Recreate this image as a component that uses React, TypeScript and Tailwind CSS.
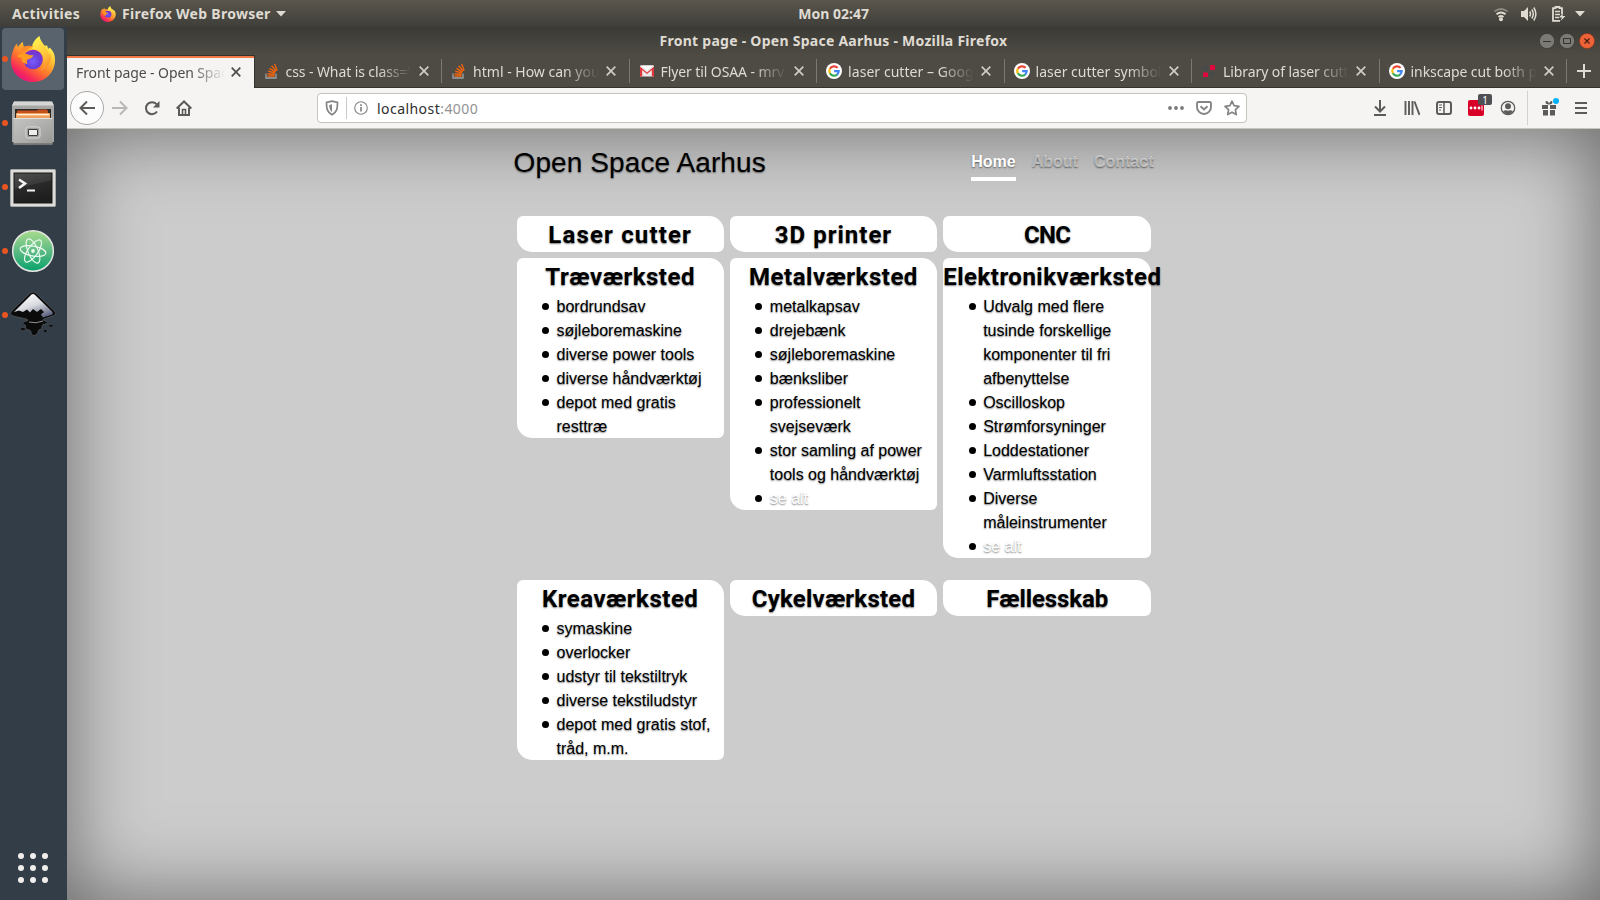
import React from "react";

const UI = "font-['Noto_Sans',sans-serif]";

function FirefoxLogo({ id, size }: { id: string; size: number }) {
  return (
    <svg width={size} height={size} viewBox="0 0 46 46" className="shrink-0">
      <defs>
        <linearGradient id={id + "a"} x1="0.85" y1="0.1" x2="0.2" y2="0.95">
          <stop offset="0" stopColor="#fff44f" />
          <stop offset="0.3" stopColor="#ffb52e" />
          <stop offset="0.6" stopColor="#ff6a30" />
          <stop offset="0.85" stopColor="#f5245f" />
          <stop offset="1" stopColor="#e31587" />
        </linearGradient>
        <radialGradient id={id + "b"} cx="0.5" cy="0.6" r="0.6">
          <stop offset="0" stopColor="#7a5cff" />
          <stop offset="0.6" stopColor="#6a3fd8" />
          <stop offset="1" stopColor="#8a2bc8" />
        </radialGradient>
        <linearGradient id={id + "c"} x1="0.3" y1="0" x2="0.7" y2="1">
          <stop offset="0" stopColor="#fff550" />
          <stop offset="0.6" stopColor="#ffc43a" />
          <stop offset="1" stopColor="#ff8a2a" />
        </linearGradient>
      </defs>
      <path
        d="M3 15c.6-3 2.200-5.500 4-7.500.2 1.500.5 2.500 1.200 3.300C9.500 8.500 11 7 13 6c-.1 2 .3 3.600 1.200 5h10L37 9.500c.5 1 .8 2 1.100 3.500l1.600-1.500C43.500 15 45.500 20 45 25.500 44.200 37.500 34.700 46 23 46S1 37 1 25c0-4 .7-7 2-10z"
        fill={"url(#" + id + "a)"}
      />
      <path
        d="M29.500 0c-5 3.500-7.700 8-7.500 13 7 .5 12 5 12.500 12-.2 4-1.800 7-4.500 9.500C38 32 42.500 25.500 40.500 17c-.5 1-.8 1.600-1.500 2.500C38.500 11 30.500 7.500 29.500 0z"
        fill={"url(#" + id + "c)"}
      />
      <circle cx="23" cy="23.500" r="9.800" fill={"url(#" + id + "b)"} />
      <path
        d="M7 20c3-2.500 7-3.500 11-1.500 1.800.9 4 .9 5.500.6-.4 2-2 3-4.500 3.800-2.500.8-2.500 3.100-1.500 5.100-5 0-6.500-4-5.500-6.500-2 0-3.500-.5-5-1.500z"
        fill="#ff9d22"
      />
      <path d="M11 13c3-4 9-4 13-2-4 0-6 1.500-7 3.500l-6 2z" fill="#ff8b28" />
    </svg>
  );
}

function FilesIcon() {
  return (
    <svg width="46" height="46" viewBox="0 0 46 46">
      <defs>
        <linearGradient id="fg" x1="0" y1="0" x2="1" y2="1">
          <stop offset="0" stopColor="#c4c4c2" />
          <stop offset="0.5" stopColor="#b0b0ae" />
          <stop offset="1" stopColor="#979795" />
        </linearGradient>
      </defs>
      <path d="M4 1.500h38l2 4.500v36H2V6z" fill="#a7a7a5" />
      <path d="M4 1.500h38l2 4H2z" fill="#d6d6d4" />
      <rect x="5" y="9" width="36" height="10" fill="#2b2826" />
      <path d="M7 10.500l20 0 1-1h9l1 2v7H7z" fill="#c4501c" />
      <rect x="6" y="13" width="34" height="6" fill="#f0a05a" />
      <rect x="7" y="14" width="32" height="1.300" fill="#fff0dc" />
      <path d="M3.500 18h39v26.500h-39z" fill="url(#fg)" />
      <path d="M3.500 18h39v1h-39z" fill="#dededc" />
      <path d="M3.500 43h39v1.500h-39z" fill="#7d7d7b" />
      <rect x="16" y="27" width="14" height="11" rx="2" fill="#a0a09e" stroke="#dcdcda" />
      <rect x="18.500" y="29.500" width="9" height="6" rx="0.500" fill="#eeeeec" stroke="#3c3c3a" />
    </svg>
  );
}

function TerminalIcon() {
  return (
    <svg width="46" height="46" viewBox="0 0 46 46">
      <defs>
        <linearGradient id="tg" x1="0" y1="0" x2="0.300" y2="1">
          <stop offset="0" stopColor="#4e4e4e" />
          <stop offset="0.480" stopColor="#3a3a3a" />
          <stop offset="0.500" stopColor="#2a2a2a" />
          <stop offset="1" stopColor="#1e1e1e" />
        </linearGradient>
      </defs>
      <rect x="0.500" y="5.500" width="45" height="37" rx="1" fill="#dcdcda" stroke="#a8a8a6" />
      <rect x="4" y="9" width="38" height="30" fill="url(#tg)" stroke="#161616" />
      <path d="M9 15.500l6 4-6 4.500" fill="none" stroke="#f2f2f2" strokeWidth="2.600" />
      <path d="M17 26.500h8" stroke="#f2f2f2" strokeWidth="2" />
    </svg>
  );
}

function AtomIcon() {
  return (
    <svg width="46" height="46" viewBox="0 0 46 46">
      <defs>
        <linearGradient id="ag" x1="0" y1="0" x2="0" y2="1">
          <stop offset="0" stopColor="#a9dc8e" />
          <stop offset="0.500" stopColor="#5dbb83" />
          <stop offset="1" stopColor="#08a26c" />
        </linearGradient>
      </defs>
      <circle cx="23" cy="23" r="20.300" fill="url(#ag)" stroke="#e4e6e2" strokeWidth="1.500" />
      <g fill="none" stroke="#eafaf0" strokeWidth="1.200">
        <ellipse cx="23" cy="23" rx="13" ry="5" transform="rotate(10 23 23)" />
        <ellipse cx="23" cy="23" rx="13" ry="5" transform="rotate(67 23 23)" />
        <ellipse cx="23" cy="23" rx="13" ry="5" transform="rotate(125 23 23)" />
      </g>
      <circle cx="23" cy="23" r="1.900" fill="#eafaf0" />
    </svg>
  );
}

function InkscapeIcon() {
  return (
    <svg width="46" height="46" viewBox="0 0 46 46">
      <defs>
        <linearGradient id="ig" x1="0.300" y1="0" x2="0.900" y2="1">
          <stop offset="0" stopColor="#ffffff" />
          <stop offset="0.450" stopColor="#d8dade" />
          <stop offset="1" stopColor="#4a5070" />
        </linearGradient>
      </defs>
      <path
        d="M20 1.200q3-2.400 6 0l18 17.300q3.500 4-1 5.500l-9 3c-2 1 0 2 3 2.500 2 1-1 3-4 3-2 2 0 4-3 5-2 0-1 3-4 5.500-3 2-5-1-5-3s-3-2-5-3 1-3-1-4-3-1-2-2.500 5-1 5-2.500S4 25 2 23.500q-3-2 0-5z"
        fill="#0b0b0c"
        stroke="#55585c"
        strokeWidth="0.800"
      />
      <path
        d="M21.500 2.500q1.500-1.200 3 0L42 19.500q2 2.500-1 3.500l-8 2.500-2-3 3-2.500-3-3-4 3-4-3-3 3.500-3-3-4 2.500-4-1.500-5 1.500z"
        fill="url(#ig)"
      />
      <path d="M19 30q7 2 14-1" stroke="#8d9095" strokeWidth="1" fill="none" />
      <path d="M10 36q3-1 5 0t-1 2.500-4-2.500zM33 38q3-1 4 0t-1 2.500-3-2.500zM38 33q3-1 5 0t-1 2-4-2z" fill="#0b0b0c" stroke="#4c5055" strokeWidth="0.600" />
    </svg>
  );
}

function StackIcon() {
  return (
    <svg width="16" height="16" viewBox="0 0 16 16" className="shrink-0">
      <path d="M2 10.500V15h10v-4.500" fill="none" stroke="#9ea1a4" strokeWidth="1.300" />
      <g stroke="#f0640c" strokeWidth="1.400">
        <path d="M3.500 13h7M3.600 10.700l7 .8M4.200 8.100l6.800 1.900M5.400 5.300l6 3.600M7.600 2.800l4.600 5.300M10.600 1l2.600 6.500" />
      </g>
    </svg>
  );
}

function GmailIcon() {
  return (
    <svg width="16" height="16" viewBox="0 0 16 16" className="shrink-0">
      <path d="M1 2.500h14v11H1z" fill="#eceae8" />
      <path d="M1 13.500V3.500l7 6 7-6v10h-2.200V7L8 11 3.200 7v6.500z" fill="#e0383e" />
      <path d="M2 2.500h12L8 7.500z" fill="#fff" />
    </svg>
  );
}

function GoogleIcon() {
  return (
    <svg width="16" height="16" viewBox="0 0 16 16" className="shrink-0">
      <circle cx="8" cy="8" r="8" fill="#fff" />
      <g fill="none" strokeWidth="2.200">
        <path d="M11.600 4.900A4.700 4.700 0 0 0 3.900 5.800" stroke="#ea4335" />
        <path d="M3.900 5.700a4.700 4.700 0 0 0 0 4.700" stroke="#fbbc05" />
        <path d="M3.900 10.300a4.700 4.700 0 0 0 7.300 1.200" stroke="#34a853" />
        <path d="M11.100 11.600A4.600 4.600 0 0 0 12.700 8.100H8.100" stroke="#4285f4" />
      </g>
    </svg>
  );
}

function LibraryFavicon() {
  return (
    <svg width="16" height="16" viewBox="0 0 16 16" className="shrink-0">
      <path d="M9 2h5v5H9zM2 9.500h5v4.500H2z" fill="#e0073d" />
      <path d="M2 2h5v5H2zM9 9.500h5v4.500H9z" fill="#474a49" />
    </svg>
  );
}

function CloseX({ color }: { color: string }) {
  return (
    <svg width="10" height="10" viewBox="0 0 10 10" className="shrink-0">
      <path d="M.7.700l8.600 8.600M9.300.700L.7 9.300" stroke={color} strokeWidth="1.700" />
    </svg>
  );
}

const tabs: { label: string; icon: React.ReactNode; track: string }[] = [
  { label: "css - What is class='", icon: <StackIcon />, track: "tracking-[-0.1px]" },
  { label: "html - How can you", icon: <StackIcon />, track: "tracking-[0px]" },
  { label: "Flyer til OSAA - mrv", icon: <GmailIcon />, track: "tracking-[-0.1px]" },
  { label: "laser cutter – Goog", icon: <GoogleIcon />, track: "tracking-[0.05px]" },
  { label: "laser cutter symbol", icon: <GoogleIcon />, track: "tracking-[0px]" },
  { label: "Library of laser cutt", icon: <LibraryFavicon />, track: "tracking-[-0.1px]" },
  { label: "inkscape cut both p", icon: <GoogleIcon />, track: "tracking-[-0.1px]" },
];

const fade = "[mask-image:linear-gradient(to_right,#000_calc(100%-34px),transparent)]";

function TopBar() {
  return (
    <header className={"flex h-[27px] shrink-0 items-center bg-linear-to-b from-[#5a564d] to-[#3f3e39] text-[14px] font-bold text-[#dfdbd2] " + UI}>
      <div className="flex flex-1 items-center">
        <span className="ml-3 w-[88px] whitespace-nowrap tracking-[0.3px]">Activities</span>
        <FirefoxLogo id="ft" size={16} />
        <span className="ml-[6px] w-[154px] whitespace-nowrap tracking-[0.28px]">Firefox Web Browser</span>
        <svg width="10" height="6" viewBox="0 0 10 6"><path d="M0 0h10L5 5.500z" fill="#dfdbd2" /></svg>
      </div>
      <span className="whitespace-nowrap">Mon 02:47</span>
      <div className="flex w-[731px] items-center justify-end pr-[15px]">
        <svg width="16" height="16" viewBox="0 0 16 16" fill="none">
          <path d="M1.500 5.500q6.500-5 13 0" stroke="#8c8981" strokeWidth="1.800" />
          <path d="M3.500 8.200q4.500-3.500 9 0M5.500 11q2.500-2 5 0" stroke="#dfdbd2" strokeWidth="1.800" />
          <circle cx="8" cy="13.300" r="2" fill="#dfdbd2" />
        </svg>
        <svg width="16" height="16" viewBox="0 0 16 16" className="ml-[12px]" fill="none">
          <path d="M0 5h3l4-4v14l-4-4H0z" fill="#dfdbd2" />
          <path d="M8.700 5.500q1.600 2.500 0 5M10.800 3.500q3 4.500 0 9M12.800 1.500q4.200 6.500 0 13" stroke="#dfdbd2" strokeWidth="1.500" />
        </svg>
        <svg width="16" height="16" viewBox="0 0 16 16" className="ml-[14px]" fill="none">
          <path d="M9 14.800H2V2.200h2.500V1h4v1.200H11V8" stroke="#dfdbd2" strokeWidth="1.800" />
          <path d="M4 5.500h5M4 8.500h5M4 11.500h4" stroke="#dfdbd2" strokeWidth="1.500" />
          <path d="M12 7l-4 4.500h3L9.500 15l5-5h-3z" fill="#dfdbd2" />
        </svg>
        <svg width="10" height="6" viewBox="0 0 10 6" className="ml-[8px]"><path d="M0 0h10L5 5.500z" fill="#dfdbd2" /></svg>
      </div>
    </header>
  );
}

function Dock() {
  const icons = [<FirefoxLogo id="fd" size={46} />, <FilesIcon />, <TerminalIcon />, <AtomIcon />, <InkscapeIcon />];
  return (
    <aside className="flex w-[67px] shrink-0 flex-col justify-between bg-[#333d47]">
      <div>
        {icons.map((icon, i) => (
          <div key={i} className="flex h-16 py-px pl-[2px]">
            <div className={"flex w-[62px] items-center rounded-[4px] " + (i === 0 ? "bg-[#59636d]" : "")}>
              <span className="size-[6px] shrink-0 rounded-full bg-[#e95420]" />
              <span className="ml-[2px]">{icon}</span>
            </div>
          </div>
        ))}
      </div>
      <div className="mb-[17px] ml-[18px] grid w-[30px] grid-cols-3 gap-[6px]">
        {Array.from({ length: 9 }, (_, i) => (
          <span key={i} className="size-[6px] rounded-full bg-[#f0efed]" />
        ))}
      </div>
    </aside>
  );
}

function TitleBar() {
  return (
    <div className={"flex h-[28px] shrink-0 items-center bg-linear-to-b from-[#3b3a36] to-[#4e4b44] text-[14px] font-bold text-[#dfdbd2] " + UI}>
      <div className="w-[65px]" />
      <span className="flex-1 whitespace-nowrap pb-[2px] text-center tracking-[0.26px]">Front page - Open Space Aarhus - Mozilla Firefox</span>
      <div className="flex w-[65px] justify-end gap-1 pr-[5px]">
        <svg width="16" height="16" viewBox="0 0 16 16"><circle cx="8" cy="8" r="7.600" fill="#7c7a74" stroke="#33322e" strokeWidth=".6" /><path d="M4 8.500h8" stroke="#33322e" /></svg>
        <svg width="16" height="16" viewBox="0 0 16 16"><circle cx="8" cy="8" r="7.600" fill="#7c7a74" stroke="#33322e" strokeWidth=".6" /><path d="M4.500 5.500h7v5h-7z" fill="none" stroke="#33322e" /></svg>
        <svg width="16" height="16" viewBox="0 0 16 16"><circle cx="8" cy="8" r="7.600" fill="#ee6239" stroke="#8a3418" strokeWidth=".6" /><path d="M5.500 5.500l5 5M10.500 5.500l-5 5" stroke="#4a1f10" strokeWidth="1.300" /></svg>
      </div>
    </div>
  );
}

function TabStrip() {
  return (
    <div className={"flex h-[33px] shrink-0 bg-[#4e4b44] text-[14px] text-[#dfdbd2] " + UI}>
      <div className="flex w-[187.600px] shrink-0 items-center border-t border-r border-[#33322e]">
        <div className="flex h-full w-full items-center border-t-2 border-[#f07746] bg-[#f5f4f2] pr-3 pb-[2px] pl-[9px] text-[#4c4c4c]">
          <span className={"w-[149px] overflow-hidden whitespace-nowrap tracking-[-0.1px] " + fade}>Front page - Open Spac</span>
          <span className="ml-[6px] flex"><CloseX color="#4c4c4c" /></span>
        </div>
      </div>
      <div className="flex flex-1 border-b border-[#33322e]">
        {tabs.map((t) => (
          <div key={t.label} className="flex w-[187.500px] shrink-0 items-center pl-[9px]">
            {t.icon}
            <span className={"ml-[6px] w-[126px] overflow-hidden whitespace-nowrap " + t.track + " " + fade}>{t.label}</span>
            <span className="ml-[7px] flex"><CloseX color="#d0ccc3" /></span>
            <span className="ml-auto h-6 w-px bg-[#7b7870]" />
          </div>
        ))}
        <div className="flex flex-1 items-center justify-center">
          <svg width="14" height="14" viewBox="0 0 14 14"><path d="M7 0v14M0 7h14" stroke="#dfdbd2" strokeWidth="2" /></svg>
        </div>
      </div>
    </div>
  );
}

function Toolbar() {
  const s = { fill: "none", stroke: "#5c5b59", strokeWidth: 2 } as const;
  const g = { fill: "none", stroke: "#858483", strokeWidth: 1.7 } as const;
  return (
    <div className={"flex h-[41px] shrink-0 items-center border-b border-[#c8c4be] bg-[#f5f4f2] " + UI}>
      <div className="ml-[3px] flex size-[34px] shrink-0 items-center justify-center rounded-full border border-[#a9a8a6] bg-[#fcfcfc]">
        <svg width="16" height="16" viewBox="0 0 16 16" {...s}><path d="M16 8H1.500M8 1.500L1.500 8 8 14.500" /></svg>
      </div>
      <svg width="16" height="16" viewBox="0 0 16 16" className="ml-[8px]" {...s} stroke="#b9b8b6"><path d="M0 8h14.500M8 1.500L14.500 8 8 14.500" /></svg>
      <svg width="16" height="16" viewBox="0 0 16 16" className="ml-[16px]" {...s}><path d="M13 11.500A6 6 0 1 1 12.500 4.200" /><path d="M15.500 1v6.500H9z" fill="#5c5b59" stroke="none" /></svg>
      <svg width="16" height="16" viewBox="0 0 16 16" className="ml-[16px]" {...s}><path d="M.7 8.500L8 1.500l7.300 7M3 7.500V15h10V7.500" /><path d="M6.500 15V9.500h3V15" strokeWidth="1.600" /></svg>
      <div className="ml-[125px] flex h-[30px] w-[930px] items-center rounded-[4px] border border-[#c6c2bc] bg-white">
        <svg width="14" height="16" viewBox="0 0 14 16" className="ml-[7px]" {...g}><path d="M7 1.200l5.500 1.300c0 6-.5 9.500-5.500 12.300C2 12 1.500 8.500 1.500 2.500z" /><path d="M7 4.200v8C5 10.500 4.300 8.500 4.200 5z" fill="#858483" stroke="none" /></svg>
        <span className="ml-[7px] h-[22px] w-px bg-[#c9c9c9]" />
        <svg width="14" height="14" viewBox="0 0 14 14" className="ml-[7px]" {...g} strokeWidth="1.100"><circle cx="7" cy="7" r="6.300" /><path d="M7 6v4.500M7 3.200v1.700" strokeWidth="1.700" /></svg>
        <span className="ml-[9px] text-[14px] tracking-[0.45px] text-[#2e2e2e]">localhost<span className="text-[#929292]">:4000</span></span>
        <div className="ml-auto flex items-center gap-3 pr-[6px]">
          <svg width="16" height="16" viewBox="0 0 16 16" fill="#7a7a7a"><circle cx="2" cy="8" r="1.900" /><circle cx="8" cy="8" r="1.900" /><circle cx="14" cy="8" r="1.900" /></svg>
          <svg width="16" height="16" viewBox="0 0 16 16" {...g} strokeWidth="1.900"><path d="M2.500 2h11q1.500 0 1.500 1.500V7a7 7 0 0 1-14 0V3.500Q1 2 2.500 2z" /><path d="M4.500 6.200L8 9.500l3.500-3.300" /></svg>
          <svg width="16" height="16" viewBox="0 0 16 16" {...g} strokeLinejoin="round"><path d="M8 1.200l2.100 4.500 4.900.6-3.600 3.400.9 4.900L8 12.200l-4.300 2.400.9-4.900L1 6.300l4.900-.6z" /></svg>
        </div>
      </div>
      <div className="ml-auto flex h-full items-center">
        <svg width="16" height="16" viewBox="0 0 16 16" {...s}><path d="M8 0v11M3 6.500L8 11.500l5-5M2 15h12" /></svg>
        <svg width="16" height="16" viewBox="0 0 16 16" className="ml-4" {...s}><path d="M1.500 1v14M5 1v14M8.500 1v14M10.500 1.500L15.500 15" strokeWidth="1.900" /></svg>
        <svg width="16" height="16" viewBox="0 0 16 16" className="ml-4" {...s}><rect x="1" y="2" width="14" height="12" rx="2" /><path d="M8 2v12" strokeWidth="1.500" /><path d="M3 5h3M3 7.500h3M3 10h2" strokeWidth="1" /></svg>
        <div className="relative ml-4 flex size-4 items-center justify-center rounded-[2px] bg-[#d80027]">
          <svg width="14" height="6" viewBox="0 0 14 6" fill="#fff"><circle cx="2" cy="3" r="1.400" /><circle cx="6" cy="3" r="1.400" /><circle cx="10" cy="3" r="1.400" /><path d="M12.500.500h1v5h-1z" /></svg>
          <span className="absolute -top-[6px] left-[10px] flex h-[11px] w-[14px] items-center justify-center rounded-[2px] bg-[#4e5054] text-[10px] leading-none text-white">1</span>
        </div>
        <svg width="16" height="16" viewBox="0 0 16 16" className="ml-4" fill="none" stroke="#5c5b59"><circle cx="8" cy="8" r="6.700" strokeWidth="1.300" /><circle cx="8" cy="6.300" r="3" fill="#5c5b59" stroke="none" /><path d="M3 11.500q2 -2 5-.8 3-1.200 5 .8-2 2.700-5 2.700t-5-2.700z" fill="#5c5b59" stroke="none" /></svg>
        <span className="ml-[11px] h-[34px] w-px bg-[#d3d1ce]" />
        <div className="relative ml-[13px] size-4">
          <svg width="16" height="16" viewBox="0 0 16 16" fill="#5c5b59"><path d="M1 5h6v4H1zM9 5h6v4H9zM2 10h5v5.500H2zM9 10h5v5.500H9z" /><path d="M7.500 4.500C4 4.500 4 1 5.500 1S7.500 2.500 8 3.500C8.500 2.500 9 1 10.500 1S12 4.500 8.500 4.500z" /></svg>
          <span className="absolute -top-[2px] left-[12px] size-[6px] rounded-full bg-[#00b3f4]" />
        </div>
        <svg width="16" height="16" viewBox="0 0 16 16" className="ml-4 mr-[11px]" {...s}><path d="M2 3h12M2 8h12M2 13h12" /></svg>
      </div>
    </div>
  );
}

type CardData = { title: string; track: string; items?: string[]; more?: boolean };

const rows: CardData[][] = [
  [
    { title: "Laser cutter", track: "tracking-[1.15px]" },
    { title: "3D printer", track: "tracking-[1px]" },
    { title: "CNC", track: "tracking-[-0.7px]" },
  ],
  [
    { title: "Træværksted", track: "tracking-[0.5px]", items: ["bordrundsav", "søjleboremaskine", "diverse power tools", "diverse håndværktøj", "depot med gratis resttræ"] },
    { title: "Metalværksted", track: "tracking-[0.5px]", items: ["metalkapsav", "drejebænk", "søjleboremaskine", "bænksliber", "professionelt svejseværk", "stor samling af power tools og håndværktøj"], more: true },
    { title: "Elektronikværksted", track: "tracking-[0.5px]", items: ["Udvalg med flere tusinde forskellige komponenter til fri afbenyttelse", "Oscilloskop", "Strømforsyninger", "Loddestationer", "Varmluftsstation", "Diverse måleinstrumenter"], more: true },
  ],
  [
    { title: "Kreaværksted", track: "tracking-[0.5px]", items: ["symaskine", "overlocker", "udstyr til tekstiltryk", "diverse tekstiludstyr", "depot med gratis stof, tråd, m.m."] },
    { title: "Cykelværksted", track: "tracking-[0.2px]" },
    { title: "Fællesskab", track: "tracking-[-0.1px]" },
  ],
];

const bullet =
  "before:mr-[7.5px] before:-ml-[14.5px] before:inline-block before:size-[7px] before:rounded-full before:bg-black before:align-[2px] before:content-['']";

function Card({ title, track, items, more }: CardData) {
  return (
    <section className="m-[3px] rounded-tl-[6px] rounded-tr-[15px] rounded-br-[6px] rounded-bl-[15px] bg-white">
      <h2 className={"flex h-9 items-center whitespace-nowrap pt-[2px] font-['Roboto',sans-serif] text-[24px] font-bold " + track}>
        <span className="mx-auto">{title}</span>
      </h2>
      {items && (
        <ul className="-mb-px pt-px pl-10">
          {items.map((it) => (
            <li key={it} className={bullet}>{it}</li>
          ))}
          {more && (
            <li className={bullet}><a className="text-white">se alt</a></li>
          )}
        </ul>
      )}
    </section>
  );
}

function Page() {
  return (
    <main className="flex flex-1 justify-center bg-[#ccc] font-['Liberation_Sans',Arial,sans-serif] text-[16px] leading-6 text-black shadow-[inset_0_0_80px_rgba(0,0,0,0.5)] [text-shadow:0_0.8px_1.6px_rgba(0,0,0,0.5)]">
      <div className="w-[672px] p-4">
        <div className="flex justify-between">
          <h1 className="pt-px text-[28px] leading-[34px] tracking-[0.1px]">Open Space Aarhus</h1>
          <nav className="flex gap-4 font-bold text-white/50">
            <a className="border-b-4 border-white pt-[5px] pb-[3px] text-white">Home</a>
            <a className="pt-[5px]">About</a>
            <a className="pt-[5px]">Contact</a>
          </nav>
        </div>
        <div className="mt-8">
          {rows.map((row, i) => (
            <div key={i} className={"grid grid-cols-[213.33px_213.33px_214px] items-start " + (i === 1 ? "mb-4" : "")}>
              {row.map((c) => (
                <Card key={c.title} {...c} />
              ))}
            </div>
          ))}
        </div>
      </div>
    </main>
  );
}

export default function App() {
  return (
    <div className="flex h-[900px] w-[1600px] flex-col overflow-hidden">
      <TopBar />
      <div className="flex min-h-0 flex-1">
        <Dock />
        <div className="flex min-w-0 flex-1 flex-col">
          <TitleBar />
          <TabStrip />
          <Toolbar />
          <Page />
        </div>
      </div>
    </div>
  );
}
